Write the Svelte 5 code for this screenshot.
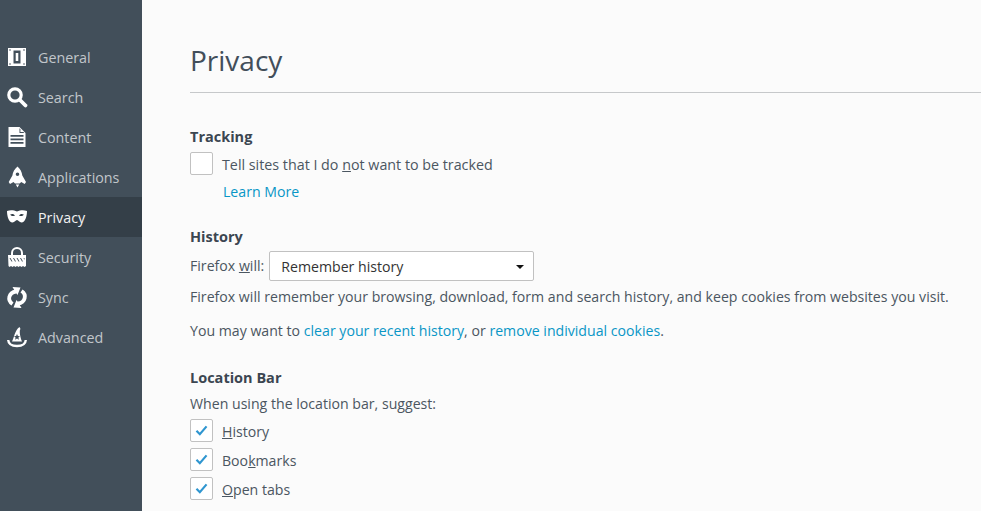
<script>
  const nav = [
    { id: 'general', label: 'General' },
    { id: 'search', label: 'Search' },
    { id: 'content', label: 'Content' },
    { id: 'applications', label: 'Applications' },
    { id: 'privacy', label: 'Privacy', active: true },
    { id: 'security', label: 'Security' },
    { id: 'sync', label: 'Sync' },
    { id: 'advanced', label: 'Advanced' }
  ];
</script>

<div class="page">
  <aside class="side">
    {#each nav as item}
      <div class="item" class:active={item.active}>
        <svg class="ico" viewBox="0 0 20 20" width="20" height="20">
          {#if item.id === 'general'}
            <path fill="#fff" fill-rule="evenodd" d="M1 1h18v18H1zM6.500 3.500v13h7v-13zM8.700 6h2.600v8H8.700z"/>
            <g fill="#424f5a"><circle cx="3" cy="3" r=".8"/><circle cx="17" cy="3" r=".8"/><circle cx="3" cy="17" r=".8"/><circle cx="17" cy="17" r=".8"/></g>
          {:else if item.id === 'search'}
            <circle cx="8" cy="8" r="6.200" fill="none" stroke="#fff" stroke-width="3.200"/>
            <path d="M13 13l5.500 5.500" stroke="#fff" stroke-width="3.800" stroke-linecap="round"/>
          {:else if item.id === 'content'}
            <path fill="#fff" fill-rule="evenodd" d="M1.500 0h11l6 6v14h-17zM3.500 8v1.800h13V8zM3.500 11.500v1.800h13v-1.800zM3.500 15v1.800h13V15z"/>
            <path fill="#424f5a" d="M12.500 1.200v4.800h4.800l-.9-.9h-3V2.100z"/>
          {:else if item.id === 'applications'}
            <path fill="#fff" fill-rule="evenodd" d="M10.500-.5c2.800 2.300 4.400 5.500 4.800 9l3.700 6.500-1.300 2-3.500-2-1.500 1.500H8l-1.500-1.500-3.500 2-1.300-2 3.700-6.500c.4-3.500 2.300-6.700 5.100-9zM10.500 5.500a1.800 1.800 0 1 0 0 3.600 1.800 1.800 0 0 0 0-3.600zM8.800 17.500h3.400L10.500 20.500z"/>
          {:else if item.id === 'privacy'}
            <path fill="#fff" fill-rule="evenodd" d="M0 4c3.500-1.300 7-.8 10 .6 3-1.400 6.500-1.900 10-.6 0 5.500-1.800 11.500-5.500 11.500-2.200 0-3-2.500-4.500-2.500s-2.300 2.500-4.500 2.500C1.800 15.500 0 9.500 0 4zM3.200 7.500c1 1.600 3 2 4.800 1-.9-1.700-3.200-2.100-4.800-1zM16.800 7.500c-1 1.600-3 2-4.800 1 .9-1.700 3.200-2.100 4.800-1z"/>
          {:else if item.id === 'security'}
            <path fill="none" stroke="#fff" stroke-width="2" d="M5 9V6a5 5 0 0 1 10 0v3"/>
            <path fill="#fff" fill-rule="evenodd" d="M1 8h18v11l-1.500 1-1.500-1-1.500 1-1.500-1-1.500 1-1.500-1-1.500 1-1.500-1-1.500 1-1.500-1-1.500 1-1-1zM2.500 11l2 3.500h1l-2-3.500zM6 11l2 3.500h1L7 11zM9.500 11l2 3.500h1l-2-3.500zM13 11l2 3.500h1L14 11zM16.500 11l1 2v-2z"/>
          {:else if item.id === 'sync'}
            <path fill="none" stroke="#fff" stroke-width="3.800" d="M9 4.500C1.500 5.500 0 13.500 5.500 17"/>
            <path fill="none" stroke="#fff" stroke-width="3.800" d="M11 16.500C18.500 15.500 20 7.500 14.500 4"/>
            <path fill="#fff" d="M5.500 0l8 .5-3 7.500-1.500-2zM14.500 21l-8-.5 3-7.500 1.500 2z"/>
          {:else}
            <path fill="#fff" fill-rule="evenodd" d="M12.500 0l1 2c-1.500 1-.5 8 1.500 12.500H5C7 11 8 3 12.500 0zM10 7l.9 2 2.100.2-1.600 1.400.5 2.100-1.900-1.100-1.900 1.100.5-2.100L7 9.200 9.100 9z"/>
            <path fill="none" stroke="#fff" stroke-width="2.400" d="M1.200 13c.3 4 4 6 8.800 6s8.500-2 8.800-6"/>
          {/if}
        </svg>
        <span>{item.label}</span>
      </div>
    {/each}
  </aside>

  <main class="main">
    <header class="head"><h1>Privacy</h1></header>

    <section class="tracking">
      <h2>Tracking</h2>
      <div class="check">
        <span class="box"></span>
        <span>Tell sites that I do <u>n</u>ot want to be tracked</span>
      </div>
      <a class="more" href="#top">Learn More</a>
    </section>

    <section class="history">
      <h2>History</h2>
      <div class="will">
        <span class="will-label">Firefox <u>w</u>ill:</span>
        <div class="select"><span>Remember history</span><i class="arrow"></i></div>
      </div>
      <p class="desc">Firefox will remember your browsing, download, form and search history, and keep cookies from websites you visit.</p>
      <p class="desc second">You may want to <a href="#top">clear your recent history</a>, or <a href="#top">remove individual cookies</a>.</p>
    </section>

    <section class="location">
      <h2>Location Bar</h2>
      <p class="desc suggest">When using the location bar, suggest:</p>
      {#each [['H', 'istory', ''], ['Boo', 'k', 'marks'], ['O', 'pen tabs', '']] as row, i}
        <div class="check on">
          <span class="box">
            <svg viewBox="0 0 14 12" width="13" height="11"><path d="M1.500 6.200l3.700 3.800 7.300-8.500" fill="none" stroke="#2f96d0" stroke-width="2.400"/></svg>
          </span>
          {#if i === 1}
            <span>{row[0]}<u>{row[1]}</u>{row[2]}</span>
          {:else}
            <span><u>{row[0]}</u>{row[1]}</span>
          {/if}
        </div>
      {/each}
    </section>
  </main>
</div>

<style>
  :global(body) { margin: 0; }
  .page {
    display: flex;
    width: 981px;
    height: 511px;
    overflow: hidden;
    background: #fbfbfb;
    font-family: "Open Sans", "Noto Sans", sans-serif;
    font-size: 14.13px;
    color: #4b5661;
  }
  .side {
    width: 142px;
    flex: none;
    box-sizing: border-box;
    padding-top: 37px;
    background: #424f5a;
  }
  .item {
    display: flex;
    align-items: center;
    gap: 11px;
    height: 40px;
    padding-left: 7px;
    color: #c1c6ca;
    font-size: 14.3px;
  }
  .item.active {
    background: #343f48;
    color: #f2f2f2;
  }
  .ico { flex: none; overflow: visible; }
  .main {
    flex: 1;
    min-width: 0;
    padding-left: 48px;
  }
  .head {
    height: 93px;
    box-sizing: border-box;
    border-bottom: 1px solid #c6c8ca;
    padding-top: 41px;
  }
  h1 {
    margin: 0;
    font-size: 28px;
    font-weight: 400;
    line-height: 38px;
    color: #424e5a;
  }
  h2 {
    margin: 0;
    font-size: 14.5px;
    font-weight: 700;
    line-height: 20px;
    color: #3b4651;
  }
  section { width: 800px; }
  .tracking { padding-top: 34px; }
  .history { padding-top: 25px; }
  .location { padding-top: 27px; }
  .check {
    display: flex;
    align-items: center;
    gap: 9px;
    height: 29px;
  }
  .tracking .check { height: 24px; margin-top: 5px; font-size: 14.29px; }
  .box {
    width: 23px;
    height: 23px;
    box-sizing: border-box;
    flex: none;
    display: flex;
    align-items: center;
    justify-content: center;
    margin-bottom: 2px;
    background: #fff;
    border: 1px solid #c1c1c1;
    border-radius: 2px;
  }
  .more {
    display: block;
    margin: 6px 0 0 33px;
    line-height: 20px;
  }
  a { color: #0996c6; text-decoration: none; }
  .will {
    display: flex;
    align-items: center;
    gap: 5px;
    height: 30px;
    margin-top: 4px;
  }
  .will-label { padding-bottom: 2px; }
  .select {
    width: 265px;
    height: 30px;
    box-sizing: border-box;
    display: flex;
    align-items: center;
    justify-content: space-between;
    padding: 1px 9px 0 11px;
    background: #fff;
    border: 1px solid #c1c1c1;
    border-radius: 2px;
    color: #333;
  }
  .arrow {
    width: 0;
    height: 0;
    border: 4.500px solid transparent;
    border-top-color: #111;
    border-bottom: 0;
  }
  p { margin: 0; }
  .desc { line-height: 20px; white-space: nowrap; }
  .history .desc { margin-top: 6px; }
  .history .second { margin-top: 14px; }
  .suggest { margin-top: 6px; margin-bottom: 3px; }
</style>
